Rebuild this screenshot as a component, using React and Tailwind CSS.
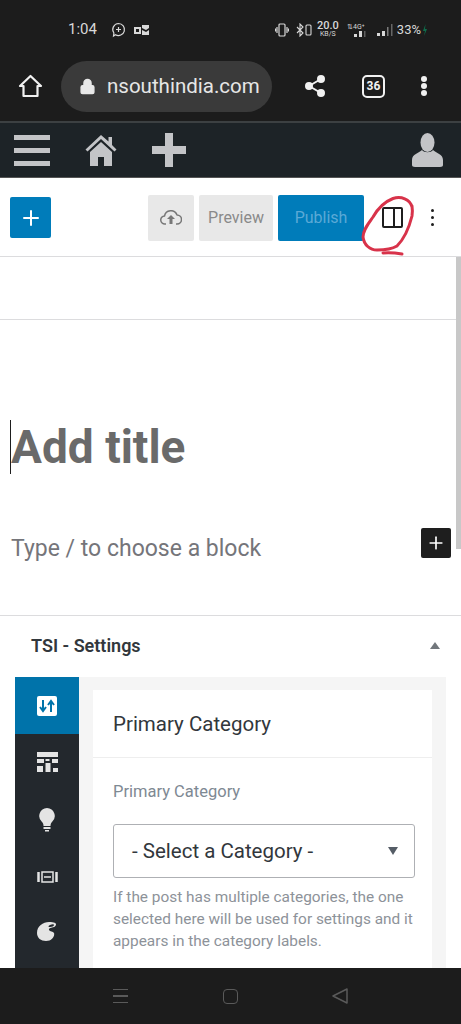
import { Lock, Share2, Plus } from "lucide-react"

const roboto = { fontFamily: "Roboto, sans-serif" }

const StatusBar = () => (
  <div className="flex items-center h-[59px] pl-[68px] pr-[33px] text-[#d8d8d8]">
    <span className="text-[15px] w-[31px]">1:04</span>
    <svg className="ml-[12px]" width="15" height="16" viewBox="0 0 15 16" fill="none" stroke="#d8d8d8" strokeWidth="1.2">
      <path d="M7.5 1.5a6 6 0 1 1-3 11.2L2.5 14l.4-3A6 6 0 0 1 7.5 1.5zM7.5 5v5M5 7.5h5" />
    </svg>
    <svg className="ml-[8px]" width="15" height="12" viewBox="0 0 15 12" fill="#d8d8d8">
      <path d="M0 3h7v7H0zM8 1h7v3l-3 2-4-2zM8 6l4 2 3-2v5H8z" />
      <rect x="2" y="5" width="3" height="3" fill="#1c1c1c" />
    </svg>
    <div className="flex-1" />
    <svg width="14" height="14" viewBox="0 0 14 14" fill="none" stroke="#d8d8d8" strokeWidth="1.2">
      <rect x="4" y="1" width="6" height="12" rx="1" />
      <path d="M2 4v6M12 4v6M0.5 5.5v3M13.5 5.5v3" />
    </svg>
    <svg className="ml-[7px]" width="16" height="14" viewBox="0 0 16 14" fill="none" stroke="#d8d8d8" strokeWidth="1.1">
      <path d="M1 4l6 6-3 3V1l3 3-6 6" />
      <rect x="10" y="2" width="5" height="10" rx="1" />
    </svg>
    <div className="ml-[4px] w-[24px] flex flex-col items-center leading-none">
      <span className="text-[11px] font-medium leading-[10px]">20.0</span>
      <span className="text-[7px] leading-[7px]">KB/S</span>
    </div>
    <div className="ml-[4px] w-[24px] flex flex-col items-center">
      <span className="text-[7px] leading-[8px]">⇅4G⁺</span>
      <svg width="22" height="6" viewBox="0 0 22 6" fill="#d8d8d8">
        <rect x="9" y="3" width="3" height="3" />
        <rect x="14" y="0" width="3" height="6" />
        <rect x="19" y="0" width="1.5" height="6" opacity="0.35" />
      </svg>
    </div>
    <svg className="ml-[8px]" width="18" height="14" viewBox="0 0 18 14" fill="#d8d8d8">
      <rect x="1" y="10" width="3" height="3" />
      <rect x="6" y="8" width="3" height="5" />
      <rect x="11" y="4" width="1.5" height="9" opacity="0.5" />
      <rect x="15" y="1" width="1.5" height="12" opacity="0.4" />
    </svg>
    <span className="ml-[3px] text-[13px]">33%</span>
    <svg className="ml-[1px]" width="6" height="14" viewBox="0 0 6 14" fill="#0f6b4a">
      <path d="M3.5 1L1 8h2l-1 5 3-7H3z" />
    </svg>
  </div>
)

const ChromeBar = () => (
  <div className="flex items-center h-[62px] pb-[8px] text-[#f1f1f1]">
    <div className="w-[61px] flex justify-center">
      <svg width="25" height="24" viewBox="0 0 25 24" fill="none" stroke="#f1f1f1" strokeWidth="2.2" strokeLinejoin="round">
        <path d="M12.5 2L2 12h3.5v10h14V12H23z" />
      </svg>
    </div>
    <div className="w-[211px] h-[51px] rounded-full bg-[#3a3a3a] flex items-center pl-[18px] overflow-hidden">
      <Lock size={17} fill="#e8e8e8" stroke="#e8e8e8" strokeWidth={2} />
      <span className="ml-[11px] text-[20.5px] text-[#e6e6e6] whitespace-nowrap">nsouthindia.com</span>
    </div>
    <div className="ml-[31px] w-[24px] flex justify-center">
      <Share2 size={24} fill="#f1f1f1" stroke="#f1f1f1" strokeWidth={2} />
    </div>
    <div className="ml-[35px] w-[23px] h-[23px] rounded-[5px] border-2 border-[#f1f1f1] flex items-center justify-center text-[12px] font-bold">36</div>
    <div className="ml-[36px] flex flex-col gap-[1px]">
      <span className="w-[6px] h-[6px] rounded-full bg-[#f1f1f1]" />
      <span className="w-[6px] h-[6px] rounded-full bg-[#f1f1f1]" />
      <span className="w-[6px] h-[6px] rounded-full bg-[#f1f1f1]" />
    </div>
  </div>
)

const AdminBar = () => (
  <div className="flex items-center h-[57px] bg-[#1d2327] border-t-2 border-[#3c4042] border-b border-b-[#555]">
    <div className="ml-[14px] w-[36px] flex flex-col gap-[8px]">
      <span className="h-[5px] bg-[#c3c4c7]" />
      <span className="h-[5px] bg-[#c3c4c7]" />
      <span className="h-[5px] bg-[#c3c4c7]" />
    </div>
    <svg className="ml-[35px]" width="32" height="32" viewBox="0 0 32 32" fill="#c3c4c7">
      <path d="M16 1L0.5 15.5l2 2L16 5l13.5 12.5 2-2L27 11V3h-3.5v4.5z" />
      <path d="M5 18L16 8l11 10v14h-8v-9h-6v9H5z" />
    </svg>
    <div className="ml-[35px] relative w-[34px] h-[34px]">
      <span className="absolute left-0 right-0 top-[13px] h-[8px] bg-[#c3c4c7]" />
      <span className="absolute top-0 bottom-0 left-[13px] w-[8px] bg-[#c3c4c7]" />
    </div>
    <div className="flex-1" />
    <svg className="mr-[18px]" width="31" height="34" viewBox="0 0 31 34" fill="#c3c4c7">
      <ellipse cx="15.5" cy="9.5" rx="7" ry="9.5" />
      <path d="M10 17c-3 3-10 4-10 10v5c0 1 1 2 3 2h25c2 0 3-1 3-2v-5c0-6-7-7-10-10-2 3-9 3-11 0z" />
    </svg>
  </div>
)

const EditorHeader = () => (
  <div className="relative flex items-center h-[77px] border-b border-[#dcdcde] pl-[10px] pr-[27px] pb-[1px]">
    <div className="w-[41px] h-[41px] rounded-[2px] bg-[#007cba] flex items-center justify-center">
      <Plus size={24} stroke="#ffffff" strokeWidth={2} />
    </div>
    <div className="flex-1" />
    <div className="w-[46px] h-[46px] rounded-[2px] bg-[#e8e8e8] flex items-center justify-center">
      <svg width="22" height="15" viewBox="0 0 22 15" fill="none" stroke="#777777" strokeWidth="1.500" strokeLinejoin="round">
        <path d="M6 14H5a4 4 0 0 1-.5-8A6.500 6.500 0 0 1 17 5a4.500 4.500 0 0 1 0 9h-1" />
        <path d="M7 9l4-4 4 4h-2.500v5h-3V9z" fill="#777777" stroke="none" />
      </svg>
    </div>
    <div className="ml-[5px] w-[74px] h-[46px] rounded-[2px] bg-[#e8e8e8] flex items-center justify-center text-[16px] text-[#8a8a8a]">Preview</div>
    <div className="ml-[5px] w-[86px] h-[46px] rounded-[2px] bg-[#007cba] flex items-center justify-center text-[16px] text-[#5aa9d6]">Publish</div>
    <div className="ml-[18px] w-[21px] h-[21px] rounded-[2px] border-2 border-[#1e1e1e] flex justify-end">
      <span className="w-[2px] h-full bg-[#1e1e1e] mr-[6px]" />
    </div>
    <div className="ml-[28px] flex flex-col gap-[4px]">
      <span className="w-[3px] h-[3px] rounded-full bg-[#1e1e1e]" />
      <span className="w-[3px] h-[3px] rounded-full bg-[#1e1e1e]" />
      <span className="w-[3px] h-[3px] rounded-full bg-[#1e1e1e]" />
    </div>
    {/* hand drawn circle over the settings button */}
    <svg className="absolute left-[360px] top-[10px]" width="56" height="67" viewBox="0 0 56 67" fill="none" stroke="#d8334a" strokeWidth="3" strokeLinecap="round">
      <path d="M52 17C50 9 41 6 33 8.500 24 12 17 20 13 27 8 34 3 40 3 47c1 8 7 13 14 13 8 0 15-1 20-4 7-7 12-18 15-30 .5-4 .5-7 0-10" />
      <path d="M23 63c6-.5 13 0 19 1" />
    </svg>
  </div>
)

const NavIcon = ({ active, children }) => (
  <div className={`h-[57px] flex items-center justify-center ${active ? "bg-[#0073aa]" : ""}`}>{children}</div>
)

const SettingsPanel = () => (
  <div className="pt-[14px]">
    <div className="flex items-center justify-between pl-[31px] pr-[21px] h-[30px]">
      <span className="text-[18px] font-semibold text-[#32373c]">TSI - Settings</span>
      <span className="w-0 h-0 border-x-[5px] border-x-transparent border-b-[7px] border-b-[#72777c]" />
    </div>
    <div className="flex mt-[17px] ml-[15px] mr-[15px] h-[291px] overflow-hidden bg-[#f5f5f5]">
      <div className="w-[64px] bg-[#23282d] shrink-0">
        <NavIcon active>
          <svg width="20" height="20" viewBox="0 0 20 20">
            <rect width="20" height="20" rx="2" fill="#ffffff" />
            <path d="M6 4v10M3 11l3 4 3-4M14 16V6M11 9l3-4 3 4" fill="none" stroke="#0073aa" strokeWidth="2" />
          </svg>
        </NavIcon>
        <NavIcon>
          <svg width="21" height="21" viewBox="0 0 21 21" fill="#e4e4e4">
            <path d="M0 0h21v5H0zM0 7h7v4H0zM8.500 7h4v2h-4zM15 7h6v4h-6zM0 14h6v6H0zM8.500 11h5v9h-5zM16 16h5v4h-5z" />
          </svg>
        </NavIcon>
        <NavIcon>
          <svg width="16" height="24" viewBox="0 0 16 24" fill="#e4e4e4">
            <path d="M8 0a8 8 0 0 1 5 14c-1 1-1.500 2-1.500 4h-7c0-2-.5-3-1.500-4A8 8 0 0 1 8 0zM4.500 19h7v2h-7zM6 22h4v1.500H6z" />
          </svg>
        </NavIcon>
        <NavIcon>
          <svg width="21" height="12" viewBox="0 0 21 12" fill="none" stroke="#e4e4e4">
            <path strokeWidth="2.500" d="M1.500 1v10M19.500 1v10" />
            <rect x="5" y="1" width="11" height="10" strokeWidth="1.500" />
            <path strokeWidth="1.500" d="M7 6h7" />
          </svg>
        </NavIcon>
        <NavIcon>
          <svg className="-mt-[5px]" width="21" height="20" viewBox="0 0 21 20" fill="#e4e4e4">
            <path fillRule="evenodd" d="M12 1C6 1 0 5 0 12c0 5 4 8 9 8 6 0 9-5 8-8-1-2-4-1-5-3-.5-2 2-2 5-3 2-1 5-5-5-5zM13 4c2-1 4-1 4 0s-2 2-4 2-2-1 0-2z" />
          </svg>
        </NavIcon>
      </div>
      <div className="ml-[14px] mr-[14px] mt-[13px] flex-1 bg-white">
        <div className="h-[68px] border-b border-[#eeeeee] flex items-center pl-[20px] pt-[2px] text-[20.5px] text-[#32373c]">Primary Category</div>
        <div className="px-[20px] pt-[24px]">
          <div className="text-[16.500px] leading-[20px] text-[#7e8993]">Primary Category</div>
          <div className="mt-[22px] -mr-[3px] h-[54px] rounded-[3px] border border-[#aeb0b4] flex items-center justify-between pl-[18px] pr-[16px]">
            <span className="text-[20.500px] text-[#32373c]">- Select a Category -</span>
            <span className="w-0 h-0 border-x-[5px] border-x-transparent border-t-[8px] border-t-[#555d66]" />
          </div>
          <p className="mt-[8px] -mr-[6px] text-[15.400px] leading-[22px] text-[#8d9299]">If the post has multiple categories, the one selected here will be used for settings and it appears in the category labels.</p>
        </div>
      </div>
    </div>
  </div>
)

const NavBar = () => (
  <div className="flex items-center h-[56px] bg-[#1c1c1c] relative">
    <div className="ml-[113px] w-[15px] flex flex-col gap-[5px]">
      <span className="h-[1.5px] bg-[#5a5a5a]" />
      <span className="h-[1.5px] bg-[#5a5a5a]" />
      <span className="h-[1.5px] bg-[#5a5a5a]" />
    </div>
    <div className="ml-[95px] w-[15px] h-[15px] rounded-[4px] border-[1.5px] border-[#5a5a5a]" />
    <svg className="ml-[94px]" width="16" height="16" viewBox="0 0 16 16" fill="none" stroke="#5a5a5a" strokeWidth="1.5" strokeLinejoin="round">
      <path d="M15 1L1 8l14 7z" />
    </svg>
  </div>
)

export default function App() {
  return (
    <div className="w-[461px] h-[1024px] overflow-hidden flex flex-col bg-white" style={roboto}>
      <div className="bg-[#1c1c1c] shrink-0">
        <StatusBar />
        <ChromeBar />
      </div>
      <AdminBar />
      <div className="h-[2px] bg-white shrink-0" />
      <EditorHeader />
      <div className="relative flex-1 overflow-hidden">
        {/* page scrollbar */}
        <div className="absolute right-0 top-0 w-[5px] h-[292px] bg-[#c8c8c8]" />
        <div className="h-[63px] border-b border-[#dcdcde]" />
        <div className="relative h-[296px] border-b border-[#dcdcde] pl-[10px]">
          <div className="pt-[100px] h-[149px] flex">
            <span className="w-[1px] h-[54px] bg-[#1e1e1e]" />
            <span className="text-[46px] leading-[54px] font-bold text-[#6a6a6a]">Add title</span>
          </div>
          <div className="mt-[66px] ml-[1px] text-[23px] leading-[28px] text-[#75757a]">Type / to choose a block</div>
          <div className="absolute left-[421px] top-[208px] w-[30px] h-[30px] rounded-[2px] bg-[#1e1e1e] flex items-center justify-center">
            <Plus size={20} stroke="#ffffff" strokeWidth={2} />
          </div>
        </div>
        <SettingsPanel />
      </div>
      <div className="shrink-0">
        <NavBar />
      </div>
    </div>
  )
}
